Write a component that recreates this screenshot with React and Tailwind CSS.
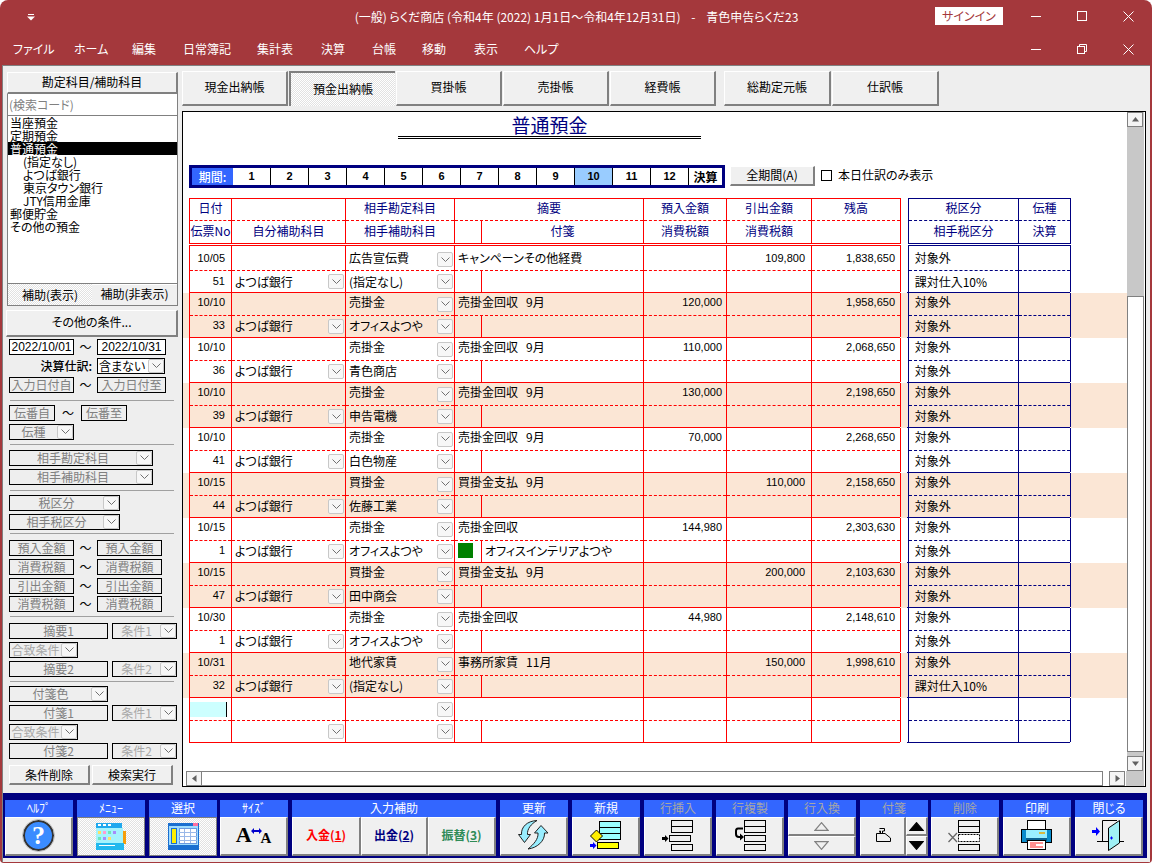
import React from 'react';

const raised = 'bg-[#f0f0f0] border-t border-l border-t-white border-l-white border-r-2 border-b-2 border-r-[#808080] border-b-[#808080]';
const dither = '[background-image:repeating-conic-gradient(#e2e2e2_0_25%,#ffffff_0_50%)] [background-size:2px_2px]';

const rows = [
  { d: '10/05', no: '51', acc: '広告宣伝費', sub: '(指定なし)', memo: 'キャンペーンその他経費', out: '109,800', bal: '1,838,650', tax: '課対仕入10%' },
  { d: '10/10', no: '33', acc: '売掛金', sub: 'オフィスよつや', memo: '売掛金回収   9月', inn: '120,000', bal: '1,958,650' },
  { d: '10/10', no: '36', acc: '売掛金', sub: '青色商店', memo: '売掛金回収   9月', inn: '110,000', bal: '2,068,650' },
  { d: '10/10', no: '39', acc: '売掛金', sub: '申告電機', memo: '売掛金回収   9月', inn: '130,000', bal: '2,198,650' },
  { d: '10/10', no: '41', acc: '売掛金', sub: '白色物産', memo: '売掛金回収   9月', inn: '70,000', bal: '2,268,650' },
  { d: '10/15', no: '44', acc: '買掛金', sub: '佐藤工業', memo: '買掛金支払   9月', out: '110,000', bal: '2,158,650' },
  { d: '10/15', no: '1', acc: '売掛金', sub: 'オフィスよつや', memo: '売掛金回収', inn: '144,980', bal: '2,303,630', note: 'オフィスインテリアよつや' },
  { d: '10/15', no: '47', acc: '買掛金', sub: '田中商会', memo: '買掛金支払   9月', out: '200,000', bal: '2,103,630' },
  { d: '10/30', no: '1', acc: '売掛金', sub: 'オフィスよつや', memo: '売掛金回収', inn: '44,980', bal: '2,148,610' },
  { d: '10/31', no: '32', acc: '地代家賃', sub: '(指定なし)', memo: '事務所家賃   11月', out: '150,000', bal: '1,998,610', tax: '課対仕入10%' },
];

const menus = [
  ['ファイル', 'w-[61px]'], ['ホーム', 'w-[58px]'], ['編集', 'w-[51px]'], ['日常簿記', 'w-[74px]'], ['集計表', 'w-[64px]'],
  ['決算', 'w-[51px]'], ['台帳', 'w-[50px]'], ['移動', 'w-[52px]'], ['表示', 'w-[50px]'], ['ヘルプ', 'w-[50px]'],
];

const Chevron = ({ className = 'w-[16px] h-[15px]' }) => (
  <span className={`${className} shrink-0 flex items-center justify-center bg-[#f7f7f7] border border-[#c8c8c8] rounded-[2px]`}>
    <svg width="9" height="6" viewBox="0 0 9 6" fill="none" stroke="#707070"><path d="M0.500 0.500 L4.500 4.500 L8.500 0.500" /></svg>
  </span>
);

// pad nudges the text of a cell, the chevrons stay centred
const Cell = ({ h, dashed, blue, pad = '', children }) => {
  const line = blue ? 'border-[#000080]' : 'border-[#ff0000]';
  return (
    <div className={`${h} ${pad} w-full flex items-center ${dashed ? `border-b border-dashed ${line}` : ''}`}>{children}</div>
  );
};

const Head = ({ children }) => <span className="w-full text-center text-[#000080]">{children}</span>;
const Num = ({ pr = 'pr-[4px]', children }) => <span className={`w-full text-right ${pr} [font-family:'Liberation_Sans',sans-serif] text-[11px]`}>{children}</span>;
const Txt = ({ children }) => <span className="pl-[3px] whitespace-pre flex-1">{children}</span>;

const Rule = () => (
  <div className="h-px flex">
    <div className="w-[712px] bg-[#ff0000]" />
    <div className="w-[7px]" />
    <div className="w-[163px] bg-[#000080]" />
  </div>
);

const PairCols = ({ topH, botH, topPad, botPad, cols }) => (
  <div className="flex">
    <div className="flex border-l border-[#ff0000]">
      {cols.slice(0, 7).map((c, i) => (
        <div key={i} className={`${c.w} border-r border-[#ff0000] flex flex-col`}>
          <Cell h={topH} pad={topPad} dashed>{c.top}</Cell>
          <Cell h={botH} pad={botPad}>{c.bot}</Cell>
        </div>
      ))}
    </div>
    <div className="flex border-l border-[#000080] ml-[7px]">
      {cols.slice(7).map((c, i) => (
        <div key={i} className={`${c.w} border-r border-[#000080] flex flex-col`}>
          <Cell h={topH} pad={topPad} dashed blue>{c.top}</Cell>
          <Cell h={botH} pad={botPad}>{c.bot}</Cell>
        </div>
      ))}
    </div>
  </div>
);

const Split = ({ children }) => (
  <div className="flex h-full w-full">
    <div className="w-[27px] h-full border-r border-[#ff0000] shrink-0" />
    <div className="flex-1 h-full flex items-center pb-[2px]">{children}</div>
  </div>
);

const Pair = ({ r, band, first, cursor }) => {
  const drop = <div className="pr-[1px]"><Chevron /></div>;
  const cols = [
    {
      w: 'w-[42px]',
      top: cursor
        ? <div className="w-[37px] h-[15px] bg-[#ccffff] border-r border-black" />
        : <Num pr="pr-[6px]">{r?.d}</Num>,
      bot: <Num pr="pr-[6px]">{r?.no}</Num>,
    },
    { w: 'w-[114px]', top: null, bot: <><Txt>{r ? 'よつば銀行' : ''}</Txt>{drop}</> },
    { w: 'w-[109px]', top: <><Txt>{r?.acc}</Txt>{drop}</>, bot: <><Txt>{r?.sub}</Txt>{drop}</> },
    {
      w: 'w-[189px]',
      top: <Txt>{r?.memo}</Txt>,
      bot: (
        <Split>
          {r?.note && (
            <span className="flex items-center">
              <span className="-ml-[24px] mr-[12px] w-[15px] h-[15px] bg-[#008000]" />
              <span className="whitespace-nowrap">{r.note}</span>
            </span>
          )}
        </Split>
      ),
    },
    { w: 'w-[83px]', top: <Num>{r?.inn}</Num>, bot: null },
    { w: 'w-[85px]', top: <Num pr="pr-[6px]">{r?.out}</Num>, bot: null },
    { w: 'w-[89px]', top: <Num pr="pr-[5px]">{r?.bal}</Num>, bot: null },
    { w: 'w-[110px]', top: <Txt>{r ? ' 対象外' : null}</Txt>, bot: <Txt>{r ? ` ${r.tax || '対象外'}` : null}</Txt> },
    { w: 'w-[52px]', top: null, bot: null },
  ];
  return (
    <div className={`pl-[6px] ${band ? 'bg-[#fbe6d5]' : 'bg-white'}`}>
      <div className="w-[881px]">
        <PairCols
          topH={first ? 'h-[25px]' : 'h-[23px]'}
          botH="h-[21px]"
          topPad={first ? 'pt-[3px] [&>span]:pb-[3px]' : '[&>span]:pb-[4px]'}
          botPad={first ? '' : '[&>span]:pb-[2px]'}
          cols={cols}
        />
        <Rule />
      </div>
    </div>
  );
};

const Header = () => {
  const cols = [
    { w: 'w-[42px]', top: <Head>日付</Head>, bot: <Head>伝票No</Head> },
    { w: 'w-[114px]', top: null, bot: <Head>自分補助科目</Head> },
    { w: 'w-[109px]', top: <Head>相手勘定科目</Head>, bot: <Head>相手補助科目</Head> },
    { w: 'w-[189px]', top: <Head>摘要</Head>, bot: <Split><Head>付箋</Head></Split> },
    { w: 'w-[83px]', top: <Head>預入金額</Head>, bot: <Head>消費税額</Head> },
    { w: 'w-[85px]', top: <Head>引出金額</Head>, bot: <Head>消費税額</Head> },
    { w: 'w-[89px]', top: <Head>残高</Head>, bot: null },
    { w: 'w-[110px]', top: <Head>税区分</Head>, bot: <Head>相手税区分</Head> },
    { w: 'w-[52px]', top: <Head>伝種</Head>, bot: <Head>決算</Head> },
  ];
  return (
    <div className="pl-[6px] mt-[10px] w-[888px]">
      <Rule />
      <PairCols topH="h-[22px]" botH="h-[22px]" topPad="[&>span]:pb-[4px]" botPad="[&>span]:pb-[2px]" cols={cols} />
      <Rule />
      <div className="h-[1px]" />
      <Rule />
    </div>
  );
};

const Field = ({ w, label, center = true, arrow, dark, light, className = '' }) => (
  <div className={`${w} h-[16px] border border-black bg-[#eeeeee] flex items-center shrink-0 ${className}`}>
    <span className={`flex-1 whitespace-nowrap leading-[14px] ${center ? 'text-center' : 'pl-[1px]'} ${dark ? 'text-black' : light ? 'text-[#a8a8a8]' : 'text-[#808080]'}`}>{label}</span>
    {arrow && <Chevron className="w-[16px] h-[14px]" />}
  </div>
);

const Tilde = () => <span className="w-[23px] text-center shrink-0 text-[12px] leading-[16px]">～</span>;
const Sep = () => <div className="h-[2px] w-[164px] ml-[1px] border-t border-[#a0a0a0]" />;

const listItems = ['当座預金', '定期預金', '普通預金', '(指定なし)', 'よつば銀行', '東京タウン銀行', 'JTY信用金庫', '郵便貯金', 'その他の預金'];

const FilterPane = () => (
  <div className="w-[172px] shrink-0 flex flex-col pl-[1px]">
    <div className={`${raised} h-[22px] pb-[2px] flex items-center justify-center`}>勘定科目/補助科目</div>
    <div className="h-[22px] bg-white border border-[#808080] border-t-0 flex items-center pl-[1px] text-[#808080]">(検索コード)</div>
    <div className="h-[167px] bg-white border-x border-[#808080] leading-[13px]">
      {listItems.map((t, i) => (
        <div key={t} className={`h-[13px] whitespace-nowrap ${i === 2 ? 'bg-black text-white' : ''} ${i >= 3 && i <= 6 ? 'pl-[15px]' : 'pl-[2px]'}`}>{t}</div>
      ))}
    </div>
    <div className="h-[23px] flex border-x border-y border-[#808080]">
      <div className={`w-[84px] flex items-center justify-center ${dither}`}>補助(表示)</div>
      <div className="flex-1 bg-[#f0f0f0] flex items-center justify-center border-t border-white pb-[2px]">補助(非表示)</div>
    </div>
    <div className={`${raised} h-[27px] pb-[2px] mt-[4px] -ml-[1px] flex items-center justify-center`}>その他の条件...</div>

    <div className="pl-[2px] flex flex-col">
      <div className="flex mt-[2px]">
        <Field w="w-[65px]" label="2022/10/01" dark className="bg-white [font-family:'Liberation_Sans',sans-serif]" />
        <Tilde />
        <Field w="w-[69px]" label="2022/10/31" dark className="bg-white [font-family:'Liberation_Sans',sans-serif]" />
      </div>
      <div className="flex mt-[3px] items-center">
        <span className="w-[85px] text-right pr-[2px] font-medium leading-[16px]">決算仕訳:</span>
        <div className="w-[3px]" />
        <Field w="w-[68px]" label="含まない" center={false} dark arrow className="bg-white" />
      </div>
      <div className="flex mt-[3px]">
        <Field w="w-[65px]" label="入力日付自" />
        <Tilde />
        <Field w="w-[69px]" label="入力日付至" />
      </div>
      <div className="mt-[7px]"><Sep /></div>
      <div className="flex mt-[3px]">
        <Field w="w-[46px]" label="伝番自" />
        <span className="w-[26px] text-center leading-[16px]">～</span>
        <Field w="w-[46px]" label="伝番至" />
      </div>
      <Field w="w-[65px]" label="伝種" arrow className="mt-[3px]" />
      <div className="mt-[4px]"><Sep /></div>
      <Field w="w-[144px]" label="相手勘定科目" arrow className="mt-[4px]" />
      <Field w="w-[144px]" label="相手補助科目" arrow className="mt-[3px]" />
      <div className="mt-[5px]"><Sep /></div>
      <Field w="w-[111px]" label="税区分" arrow className="mt-[3px]" />
      <Field w="w-[111px]" label="相手税区分" arrow className="mt-[3px]" />
      <div className="mt-[3px]"><Sep /></div>
      <div className="flex mt-[5px]"><Field w="w-[65px]" label="預入金額" /><Tilde /><Field w="w-[65px]" label="預入金額" /></div>
      <div className="flex mt-[3px]"><Field w="w-[65px]" label="消費税額" /><Tilde /><Field w="w-[65px]" label="消費税額" /></div>
      <div className="flex mt-[3px]"><Field w="w-[65px]" label="引出金額" /><Tilde /><Field w="w-[65px]" label="引出金額" /></div>
      <div className="flex mt-[2px]"><Field w="w-[65px]" label="消費税額" /><Tilde /><Field w="w-[65px]" label="消費税額" /></div>
      <div className="mt-[4px]"><Sep /></div>
      <div className="flex mt-[5px] gap-[4px]"><Field w="w-[99px]" label="摘要1" /><Field w="w-[65px]" label="条件1" light arrow /></div>
      <Field w="w-[69px]" label="合致条件" light arrow className="mt-[3px]" />
      <div className="flex mt-[3px] gap-[4px]"><Field w="w-[99px]" label="摘要2" /><Field w="w-[65px]" label="条件2" light arrow /></div>
      <div className="mt-[4px]"><Sep /></div>
      <Field w="w-[99px]" label="付箋色" arrow className="mt-[3px]" />
      <div className="flex mt-[3px] gap-[4px]"><Field w="w-[99px]" label="付箋1" /><Field w="w-[65px]" label="条件1" light arrow /></div>
      <Field w="w-[69px]" label="合致条件" light arrow className="mt-[3px]" />
      <div className="flex mt-[3px] gap-[4px]"><Field w="w-[99px]" label="付箋2" /><Field w="w-[65px]" label="条件2" light arrow /></div>
      <div className="flex mt-[6px] gap-[2px]">
        <div className={`${raised} w-[81px] h-[20px] flex items-center justify-center`}>条件削除</div>
        <div className={`${raised} w-[81px] h-[20px] flex items-center justify-center`}>検索実行</div>
      </div>
    </div>
  </div>
);

const tabs = ['現金出納帳', '預金出納帳', '買掛帳', '売掛帳', '経費帳'];
const TabBar = () => (
  <div className="flex h-[35px] shrink-0 -mt-px">
    {tabs.map((t, i) => (
      <div key={t} className={`w-[106px] mr-px flex items-center justify-center ${i === 1 ? `border-t-2 border-l-2 border-[#808080] pb-px ${dither}` : `${raised} pb-[3px]`}`}>{t}</div>
    ))}
    <div className="w-[7px]" />
    {['総勘定元帳', '仕訳帳'].map((t) => (
      <div key={t} className={`w-[107px] mr-px flex items-center justify-center pb-[3px] ${raised}`}>{t}</div>
    ))}
  </div>
);

const months = ['1', '2', '3', '4', '5', '6', '7', '8', '9', '10', '11', '12'];
const PeriodBar = () => (
  <div className="flex items-start mt-[26px] pl-[6px] h-[23px]">
    <div className="w-[536px] h-[23px] border-[3px] border-[#000080] flex bg-white">
      <div className="w-[41px] bg-[#3366ff] text-white text-center leading-[17px] font-medium">期間:</div>
      {months.map((m) => (
        <div key={m} className={`w-[38px] border-r border-black text-center leading-[17px] font-bold text-[11px] [font-family:'Liberation_Sans',sans-serif] ${m === '10' ? 'bg-[#99ccff]' : ''}`}>{m}</div>
      ))}
      <div className="flex-1 text-center leading-[17px] font-bold">決算</div>
    </div>
    <div className={`${raised} ml-[5px] mt-px w-[85px] h-[20px] pb-[2px] flex items-center justify-center`}>全期間(A)</div>
    <div className="ml-[6px] mt-[5px] w-[11px] h-[11px] border border-black" />
    <span className="ml-[6px] mt-[3px] leading-[14px]">本日仕訳のみ表示</span>
  </div>
);

const Arrow = ({ d }) => (
  <div className="w-[16px] h-[15px] bg-[#f4f4f4] border border-[#808080] flex items-center justify-center shrink-0">
    <svg width="9" height="9" viewBox="0 0 9 9" fill="#606060"><path d={d} /></svg>
  </div>
);

const Ledger = () => (
  <div className="mt-[5px] flex-1 border border-black bg-white flex flex-col min-h-0">
    <div className="flex-1 flex min-h-0">
      <div className="flex-1 flex flex-col">
        <div className="h-[23px] text-center text-[#000080] text-[19px] leading-[25px] w-[733px]">普通預金</div>
        <div className="ml-[215px] w-[303px] h-[3px] border-y border-black mt-px" />
        <PeriodBar />
        <Header />
        {rows.map((r, i) => <Pair key={i} r={r} band={i % 2 === 1} first={i === 0} />)}
        <Pair cursor />
      </div>
      <div className="w-[17px] mr-[1px] flex flex-col bg-[#c8c8c8]">
        <Arrow d="M4.500 2 L8 6.500 L1 6.500 Z" />
        <div className="h-[169px]" />
        <div className="h-[456px] bg-white border border-[#808080]" />
        <div className="flex-1" />
        <Arrow d="M4.500 7 L8 2.500 L1 2.500 Z" />
      </div>
    </div>
    <div className="h-[15px] flex shrink-0">
      <div className="flex-1 flex items-center pl-[3px] pr-[1px]">
        <Arrow d="M2 4.500 L6.500 1 L6.500 8 Z" />
        <div className="flex-1 h-[15px] border-y border-r border-[#808080]" />
        <div className="w-[6px]" />
        <Arrow d="M7 4.500 L2.500 1 L2.500 8 Z" />
      </div>
      <div className="w-[18px] mr-[1px] bg-[#c8c8c8]" />
    </div>
  </div>
);

const Stack = ({ rows: rs }) => (
  <>{rs.map((r, i) => <rect key={i} x={r[0]} y={r[1]} width={r[2]} height={r[3]} fill={r[4] || '#f0f0f0'} stroke="#000" strokeDasharray={r[5]} />)}</>
);

const icons = {
  menu: (
    <svg width="32" height="27" viewBox="0 0 32 27">
      <rect x="1" y="0" width="26" height="5" fill="#1fa8ee" />
      <rect x="3" y="1" width="3" height="2" fill="#fff" /><rect x="8" y="1" width="3" height="2" fill="#fff" /><rect x="13" y="1" width="3" height="2" fill="#fff" />
      <rect x="1" y="5" width="27" height="15" fill="#a5f3fc" />
      <rect x="3" y="8" width="3" height="3" fill="#ffe066" /><rect x="8" y="8" width="3" height="3" fill="#ff9ad5" /><rect x="13" y="8" width="3" height="3" fill="#6ee7b7" /><rect x="18" y="8" width="3" height="3" fill="#a78bfa" />
      <rect x="3" y="14" width="3" height="3" fill="#6ee7b7" /><rect x="8" y="14" width="3" height="3" fill="#a78bfa" /><rect x="13" y="14" width="3" height="3" fill="#ffe066" />
      <rect x="28" y="8" width="3" height="13" fill="#f59e0b" />
      <rect x="1" y="20" width="28" height="7" fill="#22b8ee" /><rect x="4" y="22" width="16" height="1" fill="#fff" />
    </svg>
  ),
  select: (
    <svg width="31" height="27" viewBox="0 0 31 27">
      <rect x="0.500" y="0.500" width="30" height="26" fill="#9fdcff" stroke="#1a6fd0" />
      <rect x="1" y="1" width="29" height="2" fill="#1a6fd0" /><rect x="25" y="0" width="5" height="3" fill="#ff6fa0" />
      <rect x="3.500" y="5.500" width="5" height="15" fill="#ffee00" stroke="#1a6fd0" />
      <rect x="11.500" y="5.500" width="17" height="15" fill="#fff" stroke="#6a9adf" />
      <path d="M11 9.500H29M11 13.500H29M11 17.500H29M16.500 6V20M22.500 6V20" stroke="#9ab8e8" />
      <rect x="1" y="22" width="29" height="4" fill="#1a6fd0" />
    </svg>
  ),
  refresh: (
    <svg width="31" height="30" viewBox="0 0 31 30" strokeLinejoin="round">
      <path d="M3.500 14.500 C3 7 9 1 19 0.500 C13 4 9 9 9.500 14.500 H12.500 L6.500 22.500 L0.500 14.500 Z" fill="#99eeff" stroke="#222" />
      <path d="M20 13 C20.500 19 16 24 10 29 C19 28 27 21 26.500 13 H30 L23 5.500 L16.500 13 Z" fill="#99eeff" stroke="#222" />
    </svg>
  ),
  add: (
    <svg width="32" height="29" viewBox="0 0 32 29">
      <Stack rows={[[9.500, 0.500, 21, 6, '#99ffff'], [9.500, 6.500, 21, 6, '#99ffff'], [9.500, 12.500, 21, 6, '#99ffff'], [7.500, 21.500, 21, 6, '#ffff00']]} />
      <path d="M6.500 9 L12.500 15 L6.500 21 L0.500 15 Z" fill="#ffee00" stroke="#000" />
      <path d="M0 23 h3 v-2 l3.500 3.500 l-3.500 3.500 v-2 h-3 Z" fill="#0000ff" />
    </svg>
  ),
  insert: (
    <svg width="32" height="31" viewBox="0 0 32 31">
      <Stack rows={[[9.500, 0.500, 21, 6], [9.500, 6.500, 21, 6], [7.500, 15.500, 21, 6], [9.500, 24.500, 21, 6]]} />
      <path d="M0 17 h3 v-2 l3.500 3.500 l-3.500 3.500 v-2 h-3 Z" fill="#000" />
    </svg>
  ),
  copy: (
    <svg width="32" height="31" viewBox="0 0 32 31">
      <Stack rows={[[10.500, 0.500, 21, 6], [10.500, 6.500, 21, 6], [10.500, 15.500, 21, 6], [10.500, 24.500, 21, 6]]} />
      <path d="M9 8.500 H4 Q2 8.500 2 11 V14 Q2 17 5 17 H7" fill="none" stroke="#000" strokeWidth="2" />
      <path d="M6 13.500 L10 17 L6 20.500 Z" fill="#000" />
    </svg>
  ),
  del: (
    <svg width="33" height="31" viewBox="0 0 33 31">
      <Stack rows={[[10.500, 0.500, 21, 6], [10.500, 6.500, 21, 6], [10.500, 14.500, 21, 7, '#fff', '2 1'], [10.500, 24.500, 21, 6]]} />
      <path d="M0.500 13 L9 22 M9 13 L0.500 22" stroke="#666" strokeWidth="1.300" />
    </svg>
  ),
  print: (
    <svg width="31" height="30" viewBox="0 0 31 30">
      <rect x="6.500" y="0.500" width="18" height="9" fill="#fff" stroke="#000" />
      <rect x="0.500" y="9.500" width="30" height="13" fill="#0a8ccc" stroke="#000" />
      <rect x="5" y="10" width="21" height="8" fill="#99eeff" />
      <rect x="18" y="12" width="6" height="2" fill="#d8b840" />
      <rect x="5" y="18" width="21" height="3" fill="#0a6090" />
      <rect x="6.500" y="20.500" width="18" height="9" fill="#fff" stroke="#000" />
      <path d="M9 23H22M9 25H15M9 27H22" stroke="#ff2020" />
    </svg>
  ),
  close: (
    <svg width="33" height="31" viewBox="0 0 33 31">
      <path d="M5 21.500 H32" stroke="#000" />
      <path d="M10.500 21 V0.500 H25" fill="none" stroke="#000" />
      <path d="M16.500 8 L27.500 0.500 V23 L16.500 30.500 Z" fill="#a0f0f5" stroke="#000" />
      <path d="M0 10 h4 v-3 l4 4.500 l-4 4.500 v-3 h-4 Z" fill="#0000ff" />
      <path d="M18 18 h3 M19.500 16.500 v3" stroke="#0000ff" />
    </svg>
  ),
};

const Tool = ({ label, off, w = 'w-[68px]', className = '', children }) => (
  <div className={`${w} shrink-0 flex flex-col ${className}`}>
    <div className={`h-[17px] bg-[#3366ff] text-center leading-[15px] ${off ? 'text-[#a6a6a6]' : 'text-white'}`}>{label}</div>
    {children}
  </div>
);
const Btn = ({ active, className = '', children }) => (
  <div className={`h-[39px] flex items-center justify-center ${active ? `border border-[#808080] ${dither}` : `${raised} pb-[2px]`} ${className}`}>{children}</div>
);
const Tri = ({ up, fill, stroke }) => (
  <svg width="15" height="9" viewBox="0 0 15 9"><path d={up ? 'M7.500 0.700 L14 8.300 L1 8.300 Z' : 'M7.500 8.300 L14 0.700 L1 0.700 Z'} fill={fill} stroke={stroke} strokeWidth="1.200" /></svg>
);

const Toolbar = () => (
  <div className="h-[65px] mb-[4px] mr-[3px] bg-[#000080] flex gap-[4px] pl-[2px] pt-[7px] shrink-0">
    <Tool label="ﾍﾙﾌﾟ">
      <Btn>
        <span className="w-[31px] h-[31px] rounded-full bg-[#3b8cff] border-2 border-[#333333] outline outline-[#bbbbbb] text-white text-[26px] font-bold leading-[27px] text-center [font-family:'Liberation_Serif',serif]">?</span>
      </Btn>
    </Tool>
    <Tool label="ﾒﾆｭｰ"><Btn active>{icons.menu}</Btn></Tool>
    <Tool label="選択"><Btn active>{icons.select}</Btn></Tool>
    <Tool label="ｻｲｽﾞ" className="-ml-px">
      <Btn>
        <span className="flex items-end [font-family:'Liberation_Serif',serif] font-bold leading-none text-black">
          <span className="text-[22px]">A</span>
          <svg width="11" height="16" viewBox="0 0 11 16" className="-mx-[1px] self-start"><path d="M0 7 l3 -3 v2 h5 v-2 l3 3 l-3 3 v-2 h-5 v2 Z" fill="#0000cc" /></svg>
          <span className="text-[15px]">A</span>
        </span>
      </Btn>
    </Tool>
    <Tool label="入力補助" w="w-[204px]">
      <div className="flex">
        <Btn className="w-[69px] font-bold text-[#ff0000]">入金(<span className="underline">1</span>)</Btn>
        <Btn className="w-[67px] font-bold text-[#000080]">出金(<span className="underline">2</span>)</Btn>
        <Btn className="w-[68px] font-bold text-[#2e8b57]">振替(<span className="underline">3</span>)</Btn>
      </div>
    </Tool>
    <Tool label="更新"><Btn>{icons.refresh}</Btn></Tool>
    <Tool label="新規"><Btn>{icons.add}</Btn></Tool>
    <Tool label="行挿入" off><Btn>{icons.insert}</Btn></Tool>
    <Tool label="行複製" off><Btn>{icons.copy}</Btn></Tool>
    <Tool label="行入換" off>
      <div className={`${raised} h-[19px] flex items-center justify-center`}><Tri up fill="#f0f0f0" stroke="#808080" /></div>
      <div className={`${raised} h-[20px] flex items-center justify-center`}><Tri fill="#f0f0f0" stroke="#808080" /></div>
    </Tool>
    <Tool label="付箋" off>
      <div className="flex">
        <Btn className="w-[46px]">
          <svg width="16" height="14" viewBox="0 0 16 14" fill="none" stroke="#000"><path d="M4.500 0.500 H9.500 V3 H7.500 V5.500 M5.500 5.500 V3 H4.500 Z" /><path d="M1.500 5.500 H10 L15.500 10 V13.500 H1.500 Z" /></svg>
        </Btn>
        <div className="flex-1 flex flex-col">
          <div className={`${raised} h-[19px] flex items-center justify-center`}><Tri up fill="#000" stroke="#000" /></div>
          <div className={`${raised} h-[20px] flex items-center justify-center`}><Tri fill="#000" stroke="#000" /></div>
        </div>
      </div>
    </Tool>
    <Tool label="削除" off className="-ml-px"><Btn>{icons.del}</Btn></Tool>
    <Tool label="印刷"><Btn>{icons.print}</Btn></Tool>
    <Tool label="閉じる"><Btn>{icons.close}</Btn></Tool>
  </div>
);

const WinX = ({ className }) => (
  <svg width="11" height="11" viewBox="0 0 11 11" className={className} stroke="#fff"><path d="M0.500 0.500L10.500 10.500M10.500 0.500L0.500 10.500" /></svg>
);
const WinMin = ({ className }) => (
  <svg width="10" height="10" viewBox="0 0 10 10" className={className} stroke="#fff"><path d="M0 5.500H10" /></svg>
);

export default function App() {
  return (
    <div className="w-[1152px] h-[864px] bg-white overflow-hidden [font-family:'Noto_Sans_CJK_JP',sans-serif] [font-feature-settings:'palt'] text-[12px] leading-none text-black">
      <div className="w-full h-[863px] rounded-t-[8px] rounded-b-[4px] bg-[#a4383c] flex flex-col px-[2px] pb-[1px] overflow-hidden">
        <div className="h-[33px] shrink-0 flex items-center text-white -mx-[2px] relative">
          <svg width="8" height="7" viewBox="0 0 8 7" className="absolute left-[27px] top-[14px]" fill="#fff"><path d="M1 0H7V1H1Z M0 2.500H8L4 6.500Z" /></svg>
          <span className="w-full text-center pl-[1px] whitespace-pre">(一般) らくだ商店 (令和4年 (2022) 1月1日～令和4年12月31日)    -    青色申告らくだ23</span>
          <span className="absolute left-[935px] top-[7px] w-[68px] h-[18px] bg-white text-[#a4383c] flex items-center justify-center">サインイン</span>
          <WinMin className="absolute left-[1031px] top-[11px]" />
          <svg width="10" height="10" viewBox="0 0 10 10" className="absolute left-[1077px] top-[11px]" fill="none" stroke="#fff"><rect x="0.500" y="0.500" width="9" height="9" /></svg>
          <WinX className="absolute left-[1123px] top-[11px]" />
        </div>
        <div className="h-[32px] shrink-0 flex items-center pl-[11px] text-white relative">
          {menus.map(([m, w]) => <span key={m} className={`${w} shrink-0`}>{m}</span>)}
          <WinMin className="absolute left-[1029px] top-[11px]" />
          <svg width="10" height="10" viewBox="0 0 10 10" className="absolute left-[1075px] top-[11px]" fill="none" stroke="#fff"><rect x="0.500" y="2.500" width="7" height="7" /><path d="M2.500 2.500V0.500H9.500V7.500H7.500" /></svg>
          <WinX className="absolute left-[1121px] top-[11px]" />
        </div>
        <div className="flex-1 min-h-0 bg-[#eeeeee] border-t border-l border-[#808080] flex flex-col">
          <div className="flex-1 min-h-0 flex pt-[6px] pl-[3px] pr-[4px] pb-[6px]">
            <FilterPane />
            <div className="w-[4px] shrink-0" />
            <div className="flex-1 flex flex-col min-w-0">
              <TabBar />
              <Ledger />
            </div>
          </div>
          <Toolbar />
        </div>
      </div>
    </div>
  );
}
